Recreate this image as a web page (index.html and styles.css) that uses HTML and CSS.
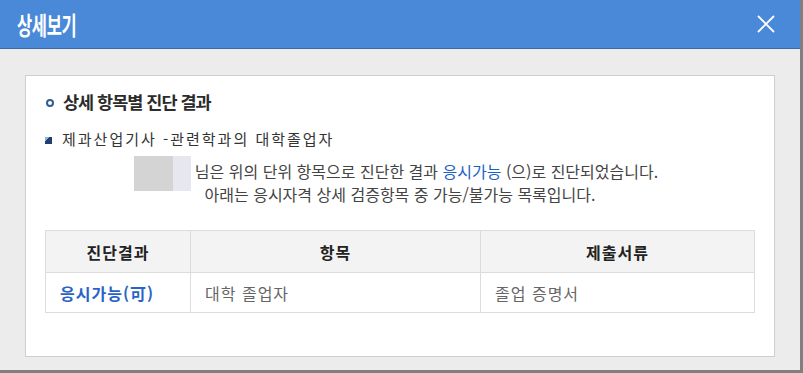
FILE: index.html
```html
<!DOCTYPE html>
<html lang="ko">
<head>
  <meta charset="UTF-8" />
  <title>상세보기</title>
  <link rel="stylesheet" href="styles.css">
</head>
<body>

  <div class="dialog">
    <div class="dialog-head">
      <h1 class="dialog-title">상세보기</h1>
      <button class="dialog-close" aria-label="닫기">
        <svg width="20" height="20" viewBox="0 0 20 20">
          <path d="M2 2 L18 18 M18 2 L2 18" stroke="#fff" stroke-width="1.8" fill="none"/>
        </svg>
      </button>
    </div>

    <div class="dialog-body">
      <div class="card">
        <h2 class="sec-title"><span class="dot"></span>상세 항목별 진단 결과</h2>
        <p class="sub-title"><span class="sq"></span>제과산업기사 -관련학과의 대학졸업자</p>

        <p class="message">
          <span class="name-mask"><span class="mask-a"></span><span class="mask-b"></span></span>님은 위의 단위 항목으로 진단한 결과 <span class="ok">응시가능</span> (으)로 진단되었습니다.<br>
          아래는 응시자격 상세 검증항목 중 가능/불가능 목록입니다.
        </p>

        <table class="result">
          <colgroup>
            <col class="c1"><col class="c2"><col class="c3">
          </colgroup>
          <thead>
            <tr><th>진단결과</th><th>항목</th><th>제출서류</th></tr>
          </thead>
          <tbody>
            <tr>
              <td class="state">응시가능(可)</td>
              <td>대학 졸업자</td>
              <td>졸업 증명서</td>
            </tr>
          </tbody>
        </table>
      </div>
    </div>
  </div>

</body>
</html>
```

FILE: styles.css
```css
body {
  margin: 0;
  background: #7f7f7f;
  font-family: "Noto Sans CJK KR", "Noto Sans", sans-serif;
  color: #333;
}

.dialog {
  width: 800px;
  height: 370px;
  background: #ececec;
}

.dialog-head {
  height: 48px;
  background: #4a89d8;
  border-bottom: 1px solid #3b6aa6;
  display: flex;
  align-items: center;
  justify-content: space-between;
  padding: 0 24px 0 17px;
}

.dialog-title {
  margin: 0;
  color: #fff;
  font-size: 25px;
  font-weight: bold;
  display: inline-block;
  transform: scaleX(0.66);
  transform-origin: left center;
  letter-spacing: -0.5px;
}

.dialog-close {
  background: none;
  border: 0;
  padding: 0;
  width: 20px;
  height: 20px;
  cursor: pointer;
}

.dialog-body {
  padding: 26px 25px 0 25px;
}

.card {
  height: 280px;
  background: #fff;
  border: 1px solid #cfcfcf;
  padding: 0 19px;
}

.sec-title {
  margin: 13px 0 0;
  font-size: 17.5px;
  font-weight: bold;
  line-height: 26px;
  letter-spacing: -1px;
  color: #2b2b2b;
  display: flex;
  align-items: center;
}

.dot {
  width: 4px;
  height: 4px;
  border: 2px solid #2f5f8f;
  border-radius: 50%;
  margin: 2px 9px 0 1px;
}

.sub-title {
  margin: 14px 0 0;
  font-size: 15px;
  line-height: 20px;
  letter-spacing: 2px;
  color: #333;
  display: flex;
  align-items: center;
}

.sq {
  width: 7px;
  height: 7px;
  background: linear-gradient(135deg, #8fb4dc 0 30%, #1f3f6e 30%);
  margin: 2px 10px 0 0;
}

.message {
  margin: 12px 0 0;
  text-align: center;
  font-size: 16px;
  line-height: 21px;
  color: #444;
}

.name-mask {
  display: inline-flex;
  vertical-align: middle;
  height: 35px;
  margin: -7px 4px -7px -8px;
}

.mask-a {
  width: 39px;
  background: #d4d4d4;
}

.mask-b {
  width: 18px;
  background: #e7e7f0;
}

.ok {
  color: #1d5fc4;
}

.result {
  margin-top: 25px;
  width: 710px;
  border-collapse: collapse;
  border: 1px solid #dcdcdc;
  font-size: 16px;
  letter-spacing: 1px;
}

.c1 { width: 145px; }
.c2 { width: 290px; }

.result th {
  height: 41px;
  background: #f3f3f3;
  border: 1px solid #dcdcdc;
  font-weight: bold;
  color: #222;
  padding: 0;
}

.result td {
  height: 39px;
  border: 1px solid #dcdcdc;
  padding: 0 0 0 14px;
  color: #666;
}

.result td.state {
  color: #2a63c6;
  font-weight: bold;
}
```
